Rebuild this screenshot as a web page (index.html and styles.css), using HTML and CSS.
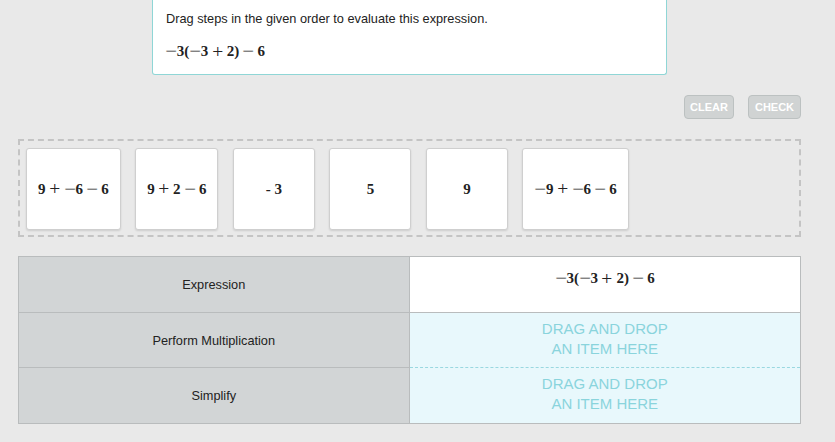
FILE: index.html
```html
<!DOCTYPE html>
<html>
<head>
<meta charset="utf-8">
<link rel="stylesheet" href="styles.css">
</head>
<body>
<div class="page">
  <div class="question">
    <p class="prompt">Drag steps in the given order to evaluate this expression.</p>
    <p class="math"><span class="sym">−</span>3(<span class="sym">−</span>3<span class="op plus">+</span>2)<span class="op">−</span>6</p>
  </div>

  <div class="actions">
    <button class="btn btn-clear">CLEAR</button>
    <button class="btn btn-check">CHECK</button>
  </div>

  <div class="bank">
    <div class="tile"><span class="math">9<span class="op plus">+</span><span class="sym">−</span>6<span class="op">−</span>6</span></div>
    <div class="tile"><span class="math">9<span class="op plus">+</span>2<span class="op">−</span>6</span></div>
    <div class="tile"><span class="math">- 3</span></div>
    <div class="tile"><span class="math">5</span></div>
    <div class="tile"><span class="math">9</span></div>
    <div class="tile"><span class="math"><span class="sym">−</span>9<span class="op plus">+</span><span class="sym">−</span>6<span class="op">−</span>6</span></div>
  </div>

  <div class="steps">
    <div class="label">Expression</div>
    <div class="given"><span class="math"><span class="sym">−</span>3(<span class="sym">−</span>3<span class="op plus">+</span>2)<span class="op">−</span>6</span></div>
    <div class="label">Perform Multiplication</div>
    <div class="drop">DRAG AND DROP<br>AN ITEM HERE</div>
    <div class="label label-last">Simplify</div>
    <div class="drop drop-last">DRAG AND DROP<br>AN ITEM HERE</div>
  </div>
</div>
</body>
</html>
```

FILE: styles.css
```css
* { box-sizing: border-box; }

html, body {
  margin: 0;
  padding: 0;
}

body {
  background: #e9e9e9;
  font-family: "Liberation Sans", Arial, sans-serif;
  color: #222;
  width: 835px;
  height: 442px;
  overflow: hidden;
}

.page {
  padding: 0 34px 0 18px;
}

.question {
  margin-left: 134px;
  width: 515px;
  background: #fff;
  border: 1px solid #8fd6d6;
  border-top: none;
  border-radius: 0 0 3px 3px;
  padding: 11px 13px 13px 12px;
}

.prompt {
  margin: 0 0 0 1px;
  font-size: 12.75px;
  line-height: 16px;
  color: #222;
}

.math {
  font-family: "Liberation Serif", "Times New Roman", serif;
  font-weight: bold;
  font-size: 15px;
  color: #222;
  white-space: nowrap;
}

.question .math {
  margin: 14px 0 0;
  line-height: 20px;
}

.sym {
  display: inline-block;
  width: 0.778em;
  text-align: center;
  font-weight: normal;
  transform: scaleX(1.4);
}

.op {
  display: inline-block;
  width: 0.778em;
  margin: 0 0.222em;
  text-align: center;
  font-weight: normal;
  transform: scaleX(1.4);
}

.op.plus {
  transform: scale(1.3);
}

.actions {
  display: flex;
  justify-content: flex-end;
  gap: 14px;
  margin-top: 20px;
  height: 24px;
}

.btn {
  height: 24px;
  padding: 0;
  background: #d0d3d3;
  border: 1px solid #bcc1c1;
  border-radius: 4px;
  color: #fff;
  font-family: "Liberation Sans", Arial, sans-serif;
  font-weight: bold;
  font-size: 11px;
}

.btn-clear { width: 50px; }
.btn-check { width: 53px; }

.bank {
  margin-top: 20px;
  height: 98px;
  border: 2px dashed #c4c4c4;
  padding: 7px 6px;
  display: flex;
  gap: 14.5px;
}

.tile {
  height: 82px;
  min-width: 82px;
  padding: 0 11px;
  background: #fff;
  border: 1px solid #cfcfcf;
  border-radius: 3px;
  box-shadow: 0 1px 2px rgba(0, 0, 0, 0.12);
  display: flex;
  align-items: center;
  justify-content: center;
}

.steps {
  margin-top: 19px;
  display: grid;
  grid-template-columns: 1fr 1fr;
  grid-template-rows: 56px 55px 55px;
  border: 1px solid #b9bcbd;
}

.label {
  background: #d2d5d6;
  border-bottom: 1px solid #b9bcbd;
  border-right: 1px solid #b9bcbd;
  display: flex;
  align-items: center;
  justify-content: center;
  font-size: 12.75px;
  color: #222;
}

.label-last { border-bottom: none; }

.given {
  background: #fff;
  border-bottom: 1px solid #b9bcbd;
  text-align: center;
  padding-top: 11px;
}

.given .math { line-height: 20px; }

.drop {
  background: #e8f8fc;
  border-bottom: 1px dashed #9ad8e0;
  color: #8ad4dc;
  font-size: 15px;
  line-height: 20px;
  text-align: center;
  padding-top: 6px;
}

.drop-last { border-bottom: none; }
```
